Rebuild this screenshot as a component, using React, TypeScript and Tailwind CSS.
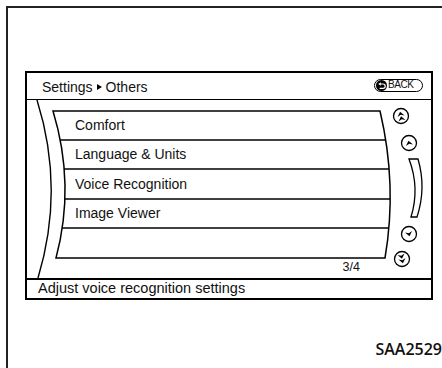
const rows = ['Comfort', 'Language & Units', 'Voice Recognition', 'Image Viewer', ''];
const rowHeights = ['h-[29px]', 'h-[29px]', 'h-[30px]', 'h-[29px]', 'h-[30px]'];

function Arrow({ x, y, dir, double }: { x: number; y: number; dir: 'up' | 'down'; double?: boolean }) {
  const rot = dir === 'up' ? -12 : 168;
  const head = 'M-3.6,2.2 L0,-2.4 L3.6,2.2 L0,0.8 Z';
  return (
    <g transform={`translate(${x} ${y})`}>
      <circle r="7.5" fill="white" stroke="black" strokeWidth="1.3" />
      <g transform={`rotate(${rot})`}>
        {double ? (
          <>
            <path d={head} transform="translate(0 -2)" fill="black" />
            <path d={head} transform="translate(0 2.6)" fill="black" />
          </>
        ) : (
          <path d={head} fill="black" />
        )}
      </g>
    </g>
  );
}

function ListArt() {
  const shape = 'M26,11 L353,11 Q370.5,85 358,158 L29,158 Q48.5,85 26,11 Z';
  return (
    <svg className="absolute inset-0 pointer-events-none" width="404" height="178" viewBox="0 0 404 178">
      <defs>
        <clipPath id="list-clip">
          <path d={shape} />
        </clipPath>
      </defs>
      <path d="M10,0 Q38,89 11,178" fill="none" stroke="black" strokeWidth="1.4" />
      <g clipPath="url(#list-clip)" stroke="black" strokeWidth="1.4">
        {[40, 69, 99, 128].map((y) => (
          <line key={y} x1="0" x2="404" y1={y} y2={y} />
        ))}
      </g>
      <path d={shape} fill="none" stroke="black" strokeWidth="1.5" />
      <path
        d="M382,59 L391,59 Q399.5,88 390,117 L384,117 Q393,88 382,59 Z"
        fill="white"
        stroke="black"
        strokeWidth="1.3"
      />
      <Arrow x={374} y={16} dir="up" double />
      <Arrow x={382} y={43} dir="up" />
      <Arrow x={382} y={134} dir="down" />
      <Arrow x={375} y={159} dir="down" double />
    </svg>
  );
}

function BackButton() {
  return (
    <div className="flex items-center h-[13px] w-[49px] rounded-full border-[1.5px] border-black pl-[1px] gap-[1px]">
      <svg width="11" height="11" viewBox="0 0 11 11">
        <circle cx="5.5" cy="5.5" r="5.5" fill="black" />
        <path d="M4.4,4 H7 A2.2,2.2 0 0 1 7,8.4 H3.6" fill="none" stroke="white" strokeWidth="1.2" />
        <path d="M2.2,4 L4.8,2.2 L4.8,5.8 Z" fill="white" />
      </svg>
      <span className="text-[10px] leading-none tracking-[-0.4px] text-[#111]">BACK</span>
    </div>
  );
}

export default function App() {
  return (
    <div className="w-[442px] h-[368px] overflow-hidden bg-white font-['Liberation_Sans',Arial,sans-serif] text-[#111]">
      <div className="ml-[6px] mt-[6px] w-[440px] h-[362px] border-l-2 border-t-2 border-[#222] flex flex-col">
        <div className="ml-[17px] mt-[63px] w-[408px] h-[229px] border-2 border-black flex flex-col">
          <div className="h-[27px] border-b border-black flex items-center justify-between pl-[15px] pr-[8px]">
            <div className="flex items-center gap-[4px] text-[14px] mt-[2px]">
              <span>Settings</span>
              <svg width="5" height="6" viewBox="0 0 5 6">
                <path d="M0,0 L5,3 L0,6 Z" fill="black" />
              </svg>
              <span>Others</span>
            </div>
            <div className="-mt-[2px]">
              <BackButton />
            </div>
          </div>
          <div className="relative h-[178px]">
            <ListArt />
            <div className="relative flex flex-col pt-[11px] pl-[48px]">
              {rows.map((r, i) => (
                <div key={i} className={`${rowHeights[i]} flex items-center text-[14px]`}>
                  {r}
                </div>
              ))}
              <div className="w-[285px] text-right text-[12.5px] leading-none mt-[3px]">3/4</div>
            </div>
          </div>
          <div className="h-[20px] border-t-2 border-black flex items-center pl-[11px] text-[14.5px]">
            Adjust voice recognition settings
          </div>
        </div>
        <div className="mt-auto mb-[11px] pr-[4px] text-right font-['Open_Sans',sans-serif] font-semibold text-[16px] leading-none text-[#111]">
          SAA2529
        </div>
      </div>
    </div>
  );
}
